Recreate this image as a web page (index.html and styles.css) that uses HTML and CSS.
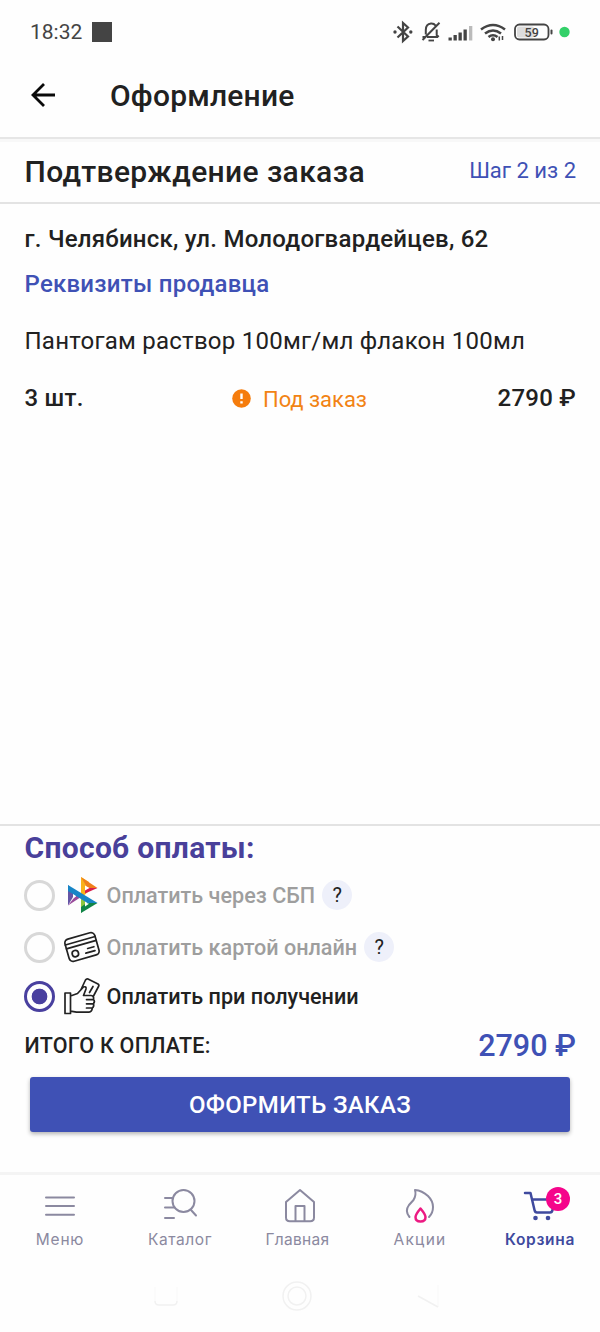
FILE: index.html
```html
<!DOCTYPE html>
<html lang="ru">
<head>
<meta charset="utf-8">
<title>Оформление</title>
<link rel="stylesheet" href="styles.css">
</head>
<body>
<div class="screen">
  <div class="status">
    <span class="clock">18:32</span>
    <span class="square"></span>
    <svg class="status-icons" width="186" height="28" viewBox="0 0 186 28" fill="none" stroke="#444" stroke-width="2">
      <path d="M7.500 8.500 18 18.500 13 23V5l5 4.500-10.500 10" stroke-width="2.200"/>
      <circle cx="5" cy="14" r="1.700" fill="#444" stroke="none"/><circle cx="20.800" cy="14" r="1.700" fill="#444" stroke="none"/>
      <path d="M37 19h11M35.800 16.500V12q0-6 5.200-6.500 3-.2 4.500 2M46.700 11.500V17l2 2M49.500 4.800 32.500 22M32.500 19h3"/>
      <path d="M38.500 22.500h5.500" stroke-width="1.800"/>
      <g stroke="none" fill="#444"><rect x="58.500" y="19.500" width="3.300" height="3"/><rect x="63.500" y="17" width="3.300" height="5.500"/><rect x="68.500" y="14.500" width="3.300" height="8"/><rect x="73.500" y="11.500" width="3.300" height="11"/></g>
      <rect x="79" y="8" width="3.300" height="14.500" fill="#bbb" stroke="none"/>
      <path d="M91 11.500q12-9 24 0M95 15.500q8-6 16 0M98.500 19q4.500-3.500 9 0" stroke-width="2.600"/>
      <circle cx="103" cy="21.300" r="2" fill="#444" stroke="none"/>
      <path d="M109.300 22.500v-4M112.500 18v4" stroke-width="1.500"/>
      <rect x="125" y="6.500" width="33.500" height="15" rx="4.500" stroke-width="1.800"/>
      <rect x="127" y="8.500" width="17" height="11" rx="2" fill="#ddd" stroke="none"/>
      <rect x="160.500" y="11.500" width="2" height="5" rx="1" fill="#444" stroke="none"/>
      <text x="141.700" y="18.500" class="battery" text-anchor="middle">59</text>
      <circle cx="174.500" cy="14" r="5.200" fill="#33d069" stroke="none"/>
    </svg>
  </div>
  <header class="header">
    <svg class="back" width="26" height="26" viewBox="0 0 26 26" fill="none" stroke="#0a0a0a" stroke-width="2.800"><path d="M25 13H3M14 2 3 13l11 11"/></svg>
    <h1 class="page-title">Оформление</h1>
  </header>
  <div class="step-row">
    <h2 class="step-title">Подтверждение заказа</h2>
    <span class="step">Шаг 2 из 2</span>
  </div>
  <main class="order">
    <div class="address">г. Челябинск, ул. Молодогвардейцев, 62</div>
    <div class="seller">Реквизиты продавца</div>
    <div class="product">Пантогам раствор 100мг/мл флакон 100мл</div>
    <div class="item">
      <span class="qty">3 шт.</span>
      <span class="stock"><svg width="19" height="19" viewBox="0 0 19 19"><circle cx="9.500" cy="9.500" r="9.300" fill="#f57c0c"/><path d="M9.500 4.500v5.600M9.500 12.200v2.400" stroke="#fff" stroke-width="2.400"/></svg><span class="stock-text">Под заказ</span></span>
      <span class="price">2790 ₽</span>
    </div>
  </main>
  <section class="payment">
    <h3 class="pay-title">Способ оплаты:</h3>
    <div class="option sbp">
      <span class="radio"></span>
      <svg class="pay-icon" width="36" height="40" viewBox="0 0 36 40">
        <path d="M17 2 25 7v9l-8 7z" fill="#f9b21a"/><path d="M17 2 33.500 13h-10z" fill="#ef7f1b"/><path d="M33.500 13 21 18.500v-5.500z" fill="#d81e4b"/>
        <path d="M17 22l4 2v9L17 38z" fill="#8dc63f"/><path d="M17 38v-6l7-5 9.500 1z" fill="#118548"/>
        <path d="M4 10v20.500l5-8.500v-6z" fill="#6555a5"/><path d="M4 30.500 17 22l-4-3z" fill="#9a4b9b"/><path d="M4 10 33.500 28h-10L4 16z" fill="#1785c6"/>
        <path d="M21 10.500v5l4.500-2.500zM9 19.500v4l3.200-2zM21 27.500v4l4-2.800z" fill="#fff"/>
      </svg>
      <span class="label">Оплатить через СБП</span><span class="help">?</span>
    </div>
    <div class="option card">
      <span class="radio"></span>
      <svg class="pay-icon" width="36" height="40" viewBox="0 0 36 40" fill="none" stroke="#222" stroke-width="1.700" stroke-linecap="round">
        <g transform="rotate(-16 18 20)"><rect x="2.500" y="8.500" width="31" height="23" rx="4"/><path d="M2.500 13.500h31M2.500 17.500h31M23 23h6.500M20 27h9.500"/><circle cx="9.800" cy="24.500" r="3.200"/></g>
      </svg>
      <span class="label">Оплатить картой онлайн</span><span class="help">?</span>
    </div>
    <div class="option cash">
      <span class="radio on"></span>
      <svg class="pay-icon" width="36" height="40" viewBox="0 0 36 40" fill="none" stroke="#222" stroke-width="1.700" stroke-linecap="round" stroke-linejoin="round">
        <path d="M1 17h5.500v20.500H1zM6.500 20l7-2.500 6-6.500q3-1 2.500 2l-2.500 6.500h7.500q3.300.5 2.500 4 1.800 1.700 0 4.200.8 3-1.200 4.200-.3 4-3.300 4.200H12.500l-6-1M22.500 23.600h7M22.500 27.800h7M22.500 32h5.500M17 13.500l4.500-9.500q1-1.500 2.500-1l10 5q1.500 1 .5 2.500L29.500 20M25.500 16.500l3.500-6"/>
      </svg>
      <span class="label">Оплатить при получении</span>
    </div>
    <div class="total"><span class="total-label">ИТОГО К ОПЛАТЕ:</span><span class="sum">2790 ₽</span></div>
    <button class="submit">ОФОРМИТЬ ЗАКАЗ</button>
  </section>
  <nav class="tabs">
    <div class="tab menu"><svg width="40" height="40" viewBox="0 0 40 40"><path d="M6 10.500h28M6 19h28M6 27.800h28"/></svg><span class="tab-name">Меню</span></div>
    <div class="tab catalog"><svg width="40" height="40" viewBox="0 0 40 40"><circle cx="23.500" cy="14" r="11"/><path d="M31 23l5 5.500M5 11h7M5 20.500h9M5 31h9"/></svg><span class="tab-name">Каталог</span></div>
    <div class="tab home"><svg width="40" height="40" viewBox="0 0 40 40"><path d="M6 15 20 3l14 12v15.500q0 3.800-3.800 3.800H9.800Q6 34.300 6 30.500zM15.500 34V19h9v15"/></svg><span class="tab-name">Главная</span></div>
    <div class="tab sale"><svg width="40" height="40" viewBox="0 0 40 40"><path d="M9.500 30Q4.500 24 9 18l4.500-5Q16.500 8 15 3 22 3.500 28 9q5 5 5 11 0 6-4 10"/><path class="drop" d="M20.500 21.500q-5 6-5 8.500 0 4.500 5 4.500t5-4.500q0-2.500-5-8.500z"/></svg><span class="tab-name">Акции</span></div>
    <div class="tab cart"><svg width="40" height="40" viewBox="0 0 40 40"><path d="M5 6h5.500l4 17Q15 25.500 17 25.500h13q2 0 2.500-2.500l2-9.500M12.500 12.500h20"/><circle class="wheel" cx="15.500" cy="31" r="2.300"/><circle class="wheel" cx="28" cy="31" r="2.300"/></svg><span class="badge">3</span><span class="tab-name">Корзина</span></div>
  </nav>
  <div class="system">
    <svg width="600" height="60" viewBox="0 0 600 60" fill="none" stroke="#f1f1f1" stroke-width="1.500"><path d="M155 36q0 4 4 4h14q4 0 4-4"/><path d="M155 36V22M177 36V22M438 42V20" stroke="#fafafa"/><circle cx="297" cy="31" r="14"/><circle cx="297" cy="31" r="9"/><path d="M418 31l20 11"/></svg>
  </div>
</div>
</body>
</html>
```
FILE: styles.css
```css
* { box-sizing: border-box; }
body { margin: 0; background: #fefefe; color: #212121; font-family: Roboto, "Noto Sans", sans-serif; }
h1, h2, h3 { margin: 0; font-weight: 500; }
svg { display: block; flex: none; }
.screen { width: 600px; height: 1332px; display: flex; flex-direction: column; overflow: hidden; white-space: nowrap; }
.status { height: 56px; padding: 8px 24px 0 30px; display: flex; align-items: center; color: #444; }
.clock { font-size: 21px; }
.square { width: 20px; height: 20px; margin-left: 10px; background: #444; }
.status-icons { margin-left: auto; }
.battery { font: 500 12.5px Roboto, sans-serif; fill: #444; stroke: none; }
.header { height: 81px; padding-left: 30px; display: flex; align-items: center; }
.back { margin-top: -4px; }
.page-title { margin: -2px 0 0 54px; font-size: 30px; letter-spacing: .2px; }
.step-row { height: 67px; padding: 0 24px 0 24.5px; display: flex; align-items: center; justify-content: space-between; border-top: 2px solid #e6e6e6; border-bottom: 2px solid #e3e3e3; box-shadow: inset 0 3px 0 #f8f8f8; }
.step-title { font-size: 30px; letter-spacing: .38px; padding-top: 1px; }
.step { font-size: 22px; color: #3f51b5; }
.order { height: 620px; padding: 13px 24px 0 24.5px; font-size: 24px; letter-spacing: .24px; }
.order > div { display: flex; align-items: center; }
.address { height: 44px; font-weight: 500; }
.seller { height: 46px; color: #3f51b5; font-weight: 500; }
.product { height: 68px; }
.item { height: 46px; font-weight: 500; }
.qty { width: 207.5px; }
.stock { display: flex; align-items: center; gap: 12px; color: #f28314; font-size: 22px; font-weight: 400; letter-spacing: -.05px; }
.stock-text { padding-top: 2px; }
.price { margin-left: auto; }
.payment { height: 348px; padding: 0 24px; border-top: 2px solid #e3e3e3; display: flex; flex-direction: column; }
.pay-title { height: 43px; margin-bottom: 1px; padding-left: .5px; display: flex; align-items: center; font-size: 30px; font-weight: 700; letter-spacing: .3px; color: #49409a; }
.option { display: flex; align-items: center; font-size: 21.6px; font-weight: 500; color: #9e9e9e; }
.sbp { height: 50px; }
.card { height: 54px; }
.cash { height: 44px; color: #212121; }
.radio { width: 31px; height: 31px; flex: none; border: 3px solid #d8d8d8; border-radius: 50%; }
.radio.on { border-color: #49409f; background: radial-gradient(circle, #49409f 7.5px, transparent 8.2px); }
.pay-icon { margin: 0 6.5px 0 9px; }
.help { width: 30px; height: 30px; margin-left: 7px; border-radius: 50%; background: #eef0fa; color: #222; font-size: 20px; line-height: 31px; text-align: center; font-weight: 400; }
.total { height: 54px; padding-left: .5px; display: flex; align-items: center; justify-content: space-between; }
.total-label { font-size: 21.5px; font-weight: 500; letter-spacing: .25px; }
.sum { font-size: 30.5px; font-weight: 500; color: #3f51b5; }
.submit { height: 55px; margin: 5px 6px 0; padding: 0; border: 0; border-radius: 3px; background: #3f51b5; color: #fff; font: 500 24px Roboto, sans-serif; letter-spacing: .35px; box-shadow: 0 2px 4px rgba(0, 0, 0, .3); }
.tabs { height: 88px; display: grid; grid-template-columns: repeat(5, 120px); border-top: 3px solid #f4f4f4; color: #8b89a0; font: 400 15.5px Inter, "Open Sans", sans-serif; }
.tab { position: relative; padding-top: 12px; display: flex; flex-direction: column; align-items: center; }
.tab svg { fill: none; stroke: #8b89a0; stroke-width: 2; stroke-linecap: round; stroke-linejoin: round; }
.tab-name { line-height: 22px; margin-top: 2px; }
.menu .tab-name { letter-spacing: .8px; }
.catalog .tab-name { letter-spacing: .6px; }
.home .tab-name { letter-spacing: .3px; margin-right: 5px; }
.sale .tab-name { letter-spacing: 1.3px; }
.cart .tab-name { letter-spacing: .7px; }
.tab .drop { stroke: #ec1a82; stroke-width: 2.5; }
.tab.cart { color: #3f4a9e; font-weight: 600; }
.tab.cart svg { stroke: #3f4a9e; stroke-width: 2.5; }
.tab .wheel { fill: #3f4a9e; stroke: none; }
.badge { position: absolute; left: 66px; top: 12px; width: 24px; height: 24px; border-radius: 50%; background: #f5058b; color: #fff; font: 500 15px/25px Roboto, sans-serif; text-align: center; }
.system { height: 72px; padding-top: 5px; }
```
